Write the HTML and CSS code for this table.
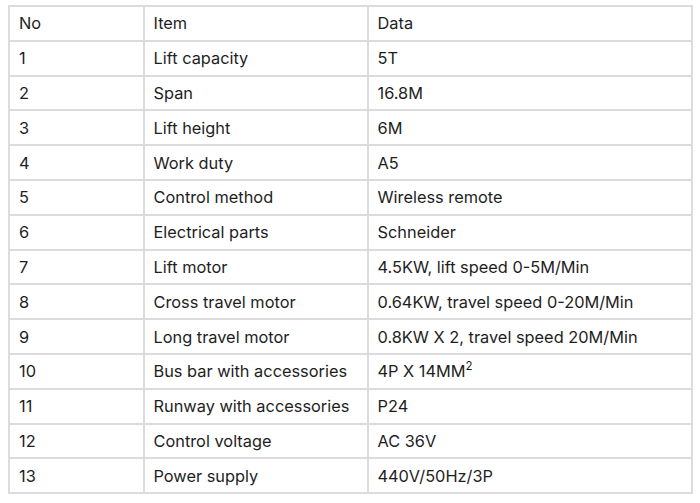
FILE: index.html
```html
<!DOCTYPE html>
<html>
<head>
<meta charset="utf-8">
<link rel="stylesheet" href="styles.css">
</head>
<body>
<table class="spec">
<colgroup><col class="c1"><col class="c2"><col class="c3"></colgroup>
<tr><td>No</td><td>Item</td><td>Data</td></tr>
<tr><td>1</td><td>Lift capacity</td><td>5T</td></tr>
<tr><td>2</td><td>Span</td><td>16.8M</td></tr>
<tr><td>3</td><td>Lift height</td><td>6M</td></tr>
<tr><td>4</td><td>Work duty</td><td>A5</td></tr>
<tr><td>5</td><td>Control method</td><td>Wireless remote</td></tr>
<tr><td>6</td><td>Electrical parts</td><td>Schneider</td></tr>
<tr><td>7</td><td>Lift motor</td><td>4.5KW, lift speed 0-5M/Min</td></tr>
<tr><td>8</td><td>Cross travel motor</td><td>0.64KW, travel speed 0-20M/Min</td></tr>
<tr><td>9</td><td>Long travel motor</td><td>0.8KW X 2, travel speed 20M/Min</td></tr>
<tr><td>10</td><td>Bus bar with accessories</td><td>4P X 14MM<sup>2</sup></td></tr>
<tr><td>11</td><td>Runway with accessories</td><td>P24</td></tr>
<tr><td>12</td><td>Control voltage</td><td>AC 36V</td></tr>
<tr><td>13</td><td>Power supply</td><td>440V/50Hz/3P</td></tr>
</table>
</body>
</html>
```
FILE: styles.css
```css
html, body {
  margin: 0;
  padding: 0;
  background: #fff;
}
body {
  padding: 5px 0 0 8px;
  font-family: Inter, "Noto Sans", sans-serif;
  font-size: 16.35px;
  color: #1e1e1e;
}
.spec {
  border-collapse: separate;
  border-spacing: 0;
  border: 1px solid #dcdcdc;
  width: 685px;
  table-layout: fixed;
}
.c1 { width: 134.5px; }
.c2 { width: 224px; }
.spec td {
  border: 1px solid #dcdcdc;
  height: 34.8px;
  padding: 0 8px 0 9px;
  box-sizing: border-box;
  line-height: 20px;
  vertical-align: middle;
  white-space: nowrap;
}
.spec sup {
  font-size: 11.5px;
  line-height: 0;
  vertical-align: 7px;
}
```
